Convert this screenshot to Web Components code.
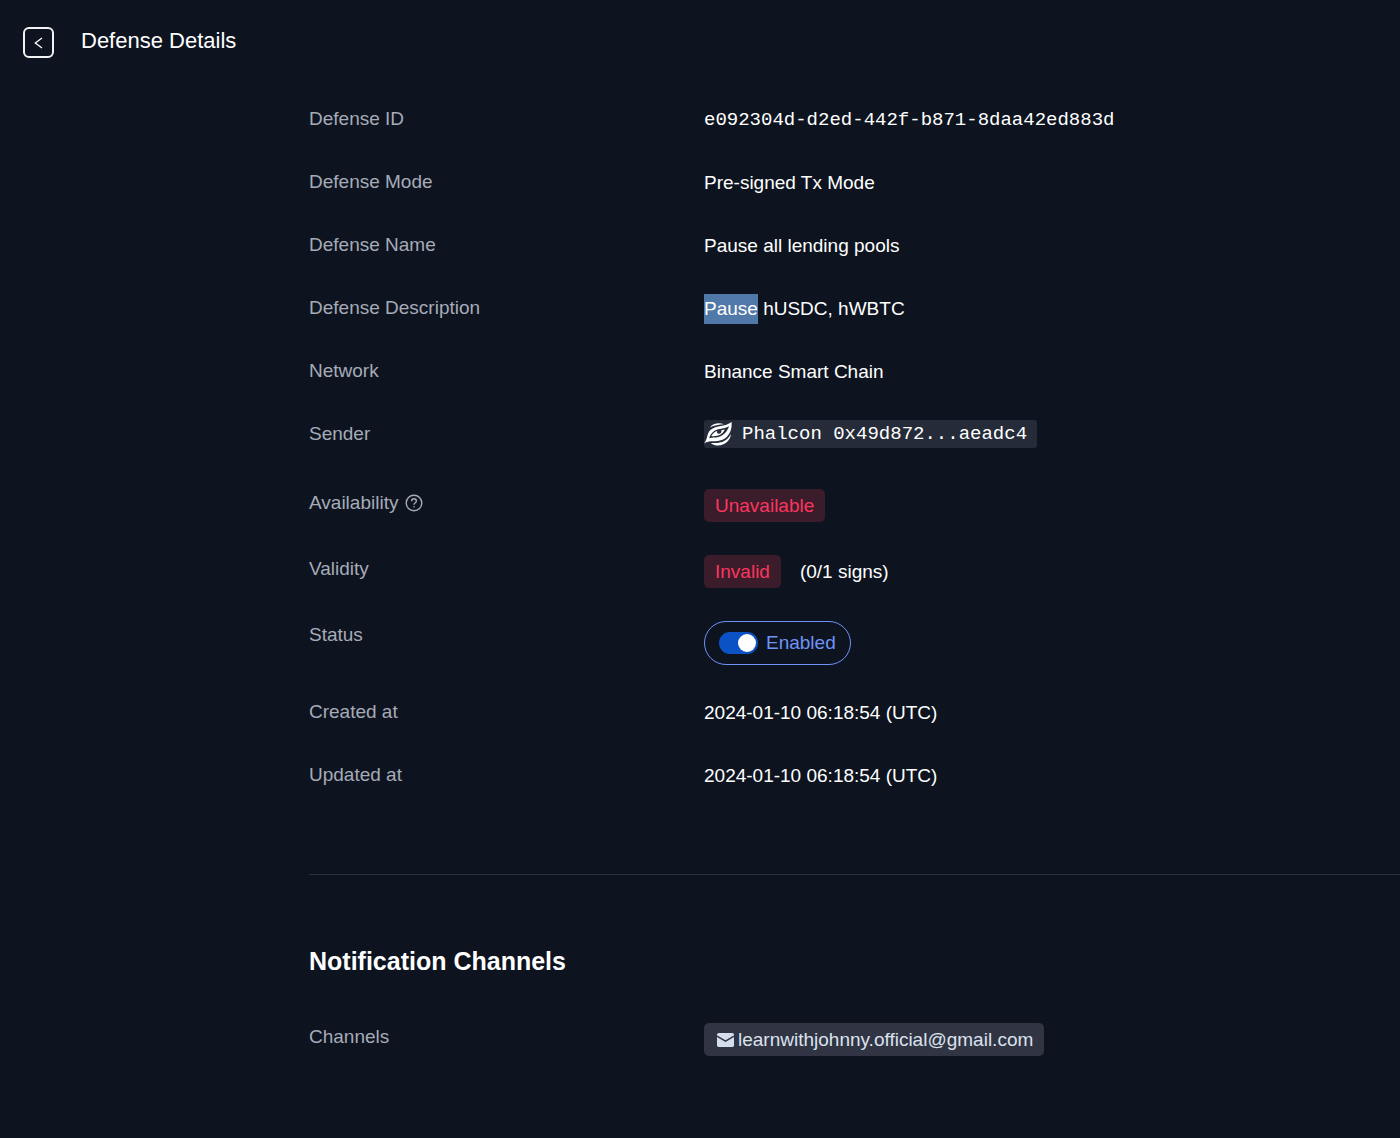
<!DOCTYPE html>
<html lang="en">
<head>
<meta charset="utf-8">
<title>Defense Details</title>
<style>
  html { background: #0d1420; }
  body { margin: 0; background: #0d1420; color: #fff; font: 19px/30px "Liberation Sans", Arial, sans-serif; }
</style>
</head>
<body>
<defense-page></defense-page>
<script>
const define = (name, html) => {
  const template = document.createElement('template');
  template.innerHTML = html;
  customElements.define(name, class extends HTMLElement {
    constructor() {
      super();
      this.attachShadow({ mode: 'open' }).append(template.content.cloneNode(true));
    }
  });
};

define('page-header', `
  <style>
    :host { display: flex; align-items: flex-start; gap: 27px; padding: 27px 23px 0; }
    button { display: grid; place-items: center; box-sizing: border-box; width: 31px; height: 31px; padding: 0;
      border: 2px solid #f1f2f4; border-radius: 6px; background: none; color: #fff; cursor: pointer; }
    h1 { margin: 0; font-size: 22px; line-height: 28px; font-weight: 400; }
  </style>
  <button type="button" aria-label="Back">
    <svg width="9" height="12" viewBox="0 0 9 12" fill="none" stroke="currentColor" stroke-width="1.3"><path d="M8 1 1.3 6 8 11"/></svg>
  </button>
  <h1><slot></slot></h1>`);

define('detail-row', `
  <style>
    :host { display: grid; grid-template-columns: 395px minmax(0, 1fr); align-items: start; }
    .label { display: flex; align-items: center; gap: 7px; color: #a6abb7; }
    .value { display: flex; align-items: center; gap: 19px; padding-top: 1px; }
  </style>
  <div class="label"><slot name="label"></slot></div>
  <div class="value"><slot></slot></div>`);

define('help-tip', `
  <style>
    :host { display: flex; color: #a6abb7; }
    button { display: flex; padding: 0; border: 0; background: none; color: inherit; cursor: help; }
  </style>
  <button type="button" aria-label="About availability">
    <svg width="18" height="18" viewBox="0 0 18 18" fill="none" stroke="currentColor" stroke-width="1.4">
      <circle cx="9" cy="9" r="7.8"/>
      <path d="M6.6 7.3C6.6 5.7 7.6 4.8 9 4.8s2.4.9 2.4 2.2C11.4 8.7 9 8.7 9 10.7"/>
      <circle cx="9" cy="12.8" r=".8" fill="currentColor" stroke="none"/>
    </svg>
  </button>`);

define('status-badge', `
  <style>
    :host { display: flex; align-items: center; box-sizing: border-box; height: 33px; padding: 1px 11px 0;
      border-radius: 5px; background: #3a1c2b; color: #fa365f; }
    :host([tone="neutral"]) { gap: 4px; padding-left: 13px; background: #313543; color: #dbe2ef; }
  </style>
  <slot name="icon"></slot><slot></slot>`);

define('mono-text', `
  <style>:host { font-family: "Liberation Mono", monospace; }</style><slot></slot>`);

define('address-chip', `
  <style>
    :host { display: block; padding-bottom: 8px; }
    .chip { display: flex; align-items: center; gap: 10px; height: 28px; padding-right: 10px; border-radius: 3px;
      background: #252b38; font-family: "Liberation Mono", monospace; }
  </style>
  <span class="chip">
    <svg width="28" height="24" viewBox="0 0 28 24" fill="#fff" aria-hidden="true">
      <path d="M5.8 5.4C9 1.600 14.500.2 20 2.300 15 2.400 10.200 3.500 5.800 5.400Z"/>
      <path d="M27.600 0C21 5.200 12.500 2.800 6.400 8 2.800 11.200 4 16.500 0 21.600 5.500 17.600 12 20.600 18.400 17.800 25 14.800 28.200 8 27.600 0Z"/>
      <path d="M5.200 16.200C7 10.200 11.500 7.600 16 7 19.400 6.500 22.400 6 25 4.300 23.600 8.600 20.200 13.600 14.600 14.900 11.200 15.700 8.200 15.100 5.200 16.200Z" fill="#252b38"/>
      <path d="M7.200 14C9.300 10.800 11.200 9.400 13.200 8.900 12.600 10.600 13.400 11.700 14.900 11.700 16.800 11.700 17.800 10.200 17.300 8.200L20.800 7.600C18.600 12.800 13.600 14.800 7.200 14Z"/>
      <path d="M6.800 20.900C16 21.900 22.800 19.600 26.900 12 26.400 21.400 14.600 27 6.800 20.900Z"/>
    </svg>
    <span><slot></slot></span>
  </span>`);

define('toggle-pill', `
  <style>
    :host { display: block; }
    label { display: flex; align-items: center; gap: 8px; box-sizing: border-box; height: 44px; padding: 0 14px;
      border: 1px solid #6c93f8; border-radius: 22px; color: #7093f6; cursor: pointer; }
    input { appearance: none; display: flex; align-items: center; box-sizing: border-box; width: 39px; height: 22px; margin: 0;
      padding: 0 2px; border-radius: 11px; background: #3a4152; cursor: pointer; }
    input::before { content: ""; width: 18px; height: 18px; border-radius: 9px; background: #fff; }
    input:checked { justify-content: flex-end; background: #0b53c4; }
  </style>
  <label><input type="checkbox" role="switch" checked><span><slot></slot></span></label>`);

define('defense-page', `
  <style>
    :host { display: block; }
    main { padding: 46px 0 0 309px; }
    section { display: flex; flex-direction: column; gap: 32px; }
    section + section { margin-top: 83px; padding-top: 71px; border-top: 1px solid #2b313e; gap: 46px; }
    h2 { margin: 0; font-size: 25px; line-height: 30px; font-weight: 700; }
    mark { display: inline-block; background: #5078a8; color: #fff; }
  </style>
  <page-header>Defense Details</page-header>
  <main>
    <section>
      <detail-row><span slot="label">Defense ID</span><mono-text>e092304d-d2ed-442f-b871-8daa42ed883d</mono-text></detail-row>
      <detail-row><span slot="label">Defense Mode</span>Pre-signed Tx Mode</detail-row>
      <detail-row><span slot="label">Defense Name</span>Pause all lending pools</detail-row>
      <detail-row><span slot="label">Defense Description</span><span><mark>Pause</mark> hUSDC, hWBTC</span></detail-row>
      <detail-row><span slot="label">Network</span>Binance Smart Chain</detail-row>
      <detail-row><span slot="label">Sender</span><address-chip>Phalcon 0x49d872...aeadc4</address-chip></detail-row>
      <detail-row><span slot="label">Availability</span><help-tip slot="label"></help-tip><status-badge>Unavailable</status-badge></detail-row>
      <detail-row><span slot="label">Validity</span><status-badge>Invalid</status-badge><span>(0/1 signs)</span></detail-row>
      <detail-row><span slot="label">Status</span><toggle-pill>Enabled</toggle-pill></detail-row>
      <detail-row><span slot="label">Created at</span>2024-01-10 06:18:54 (UTC)</detail-row>
      <detail-row><span slot="label">Updated at</span>2024-01-10 06:18:54 (UTC)</detail-row>
    </section>
    <section>
      <h2>Notification Channels</h2>
      <detail-row><span slot="label">Channels</span>
        <status-badge tone="neutral">
          <svg slot="icon" width="17" height="14" viewBox="0 0 17 14" aria-hidden="true">
            <rect width="17" height="14" rx="1.8" fill="#d5deed"/>
            <path d="M0 3.200 8.500 8.200 17 3.200" fill="none" stroke="#313543" stroke-width="1.4"/>
          </svg>learnwithjohnny.official@gmail.com</status-badge>
      </detail-row>
    </section>
  </main>`);
</script>
</body>
</html>
